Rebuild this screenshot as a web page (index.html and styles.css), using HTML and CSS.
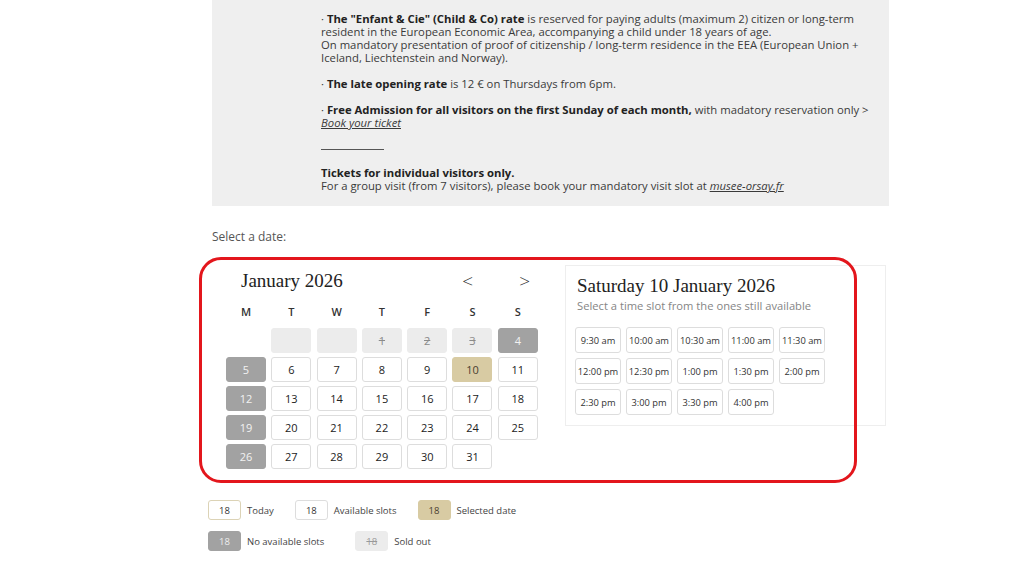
FILE: index.html
```html
<!DOCTYPE html>
<html lang="en">
<head>
<meta charset="utf-8">
<title>Select a date</title>
<link rel="stylesheet" href="styles.css">
</head>
<body>
<div class="page">
  <div class="notice">
    <p>· <b>The "Enfant &amp; Cie" (Child &amp; Co) rate</b> is reserved for paying adults (maximum 2) citizen or long-term resident in the European Economic Area, accompanying a child under 18 years of age.<br>On mandatory presentation of proof of citizenship / long-term residence in the EEA (European Union + Iceland, Liechtenstein and Norway).</p>
    <p>· <b>The late opening rate</b> is 12 € on Thursdays from 6pm.</p>
    <p>· <b>Free Admission for all visitors on the first Sunday of each month,</b> with madatory reservation only &gt; <a href="#">Book your ticket</a></p>
    <hr class="rule">
    <p><b>Tickets for individual visitors only.</b><br>For a group visit (from 7 visitors), please book your mandatory visit slot at <a href="#">musee-orsay.fr</a></p>
  </div>

  <div class="select-label">Select a date:</div>

  <div class="booking">
    <div class="calendar">
      <div class="cal-head">
        <span class="month">January 2026</span>
        <span class="nav">
          <span class="arrow">&lt;</span>
          <span class="arrow">&gt;</span>
        </span>
      </div>
      <div class="grid">
        <div class="dow">M</div><div class="dow">T</div><div class="dow">W</div><div class="dow">T</div><div class="dow">F</div><div class="dow">S</div><div class="dow">S</div>

        <div class="cell blank-first"></div>
        <div class="cell sold"></div>
        <div class="cell sold"></div>
        <div class="cell sold"><s>1</s></div>
        <div class="cell sold"><s>2</s></div>
        <div class="cell sold"><s>3</s></div>
        <div class="cell none">4</div>

        <div class="cell none">5</div>
        <div class="cell">6</div>
        <div class="cell">7</div>
        <div class="cell">8</div>
        <div class="cell">9</div>
        <div class="cell selected">10</div>
        <div class="cell">11</div>

        <div class="cell none">12</div>
        <div class="cell">13</div>
        <div class="cell">14</div>
        <div class="cell">15</div>
        <div class="cell">16</div>
        <div class="cell">17</div>
        <div class="cell">18</div>

        <div class="cell none">19</div>
        <div class="cell">20</div>
        <div class="cell">21</div>
        <div class="cell">22</div>
        <div class="cell">23</div>
        <div class="cell">24</div>
        <div class="cell">25</div>

        <div class="cell none">26</div>
        <div class="cell">27</div>
        <div class="cell">28</div>
        <div class="cell">29</div>
        <div class="cell">30</div>
        <div class="cell">31</div>
      </div>
    </div>

    <div class="panel">
      <div class="panel-title">Saturday 10 January 2026</div>
      <div class="panel-sub">Select a time slot from the ones still available</div>
      <div class="slots">
        <div class="slot">9:30 am</div>
        <div class="slot">10:00 am</div>
        <div class="slot">10:30 am</div>
        <div class="slot">11:00 am</div>
        <div class="slot">11:30 am</div>
        <div class="slot">12:00 pm</div>
        <div class="slot">12:30 pm</div>
        <div class="slot">1:00 pm</div>
        <div class="slot">1:30 pm</div>
        <div class="slot">2:00 pm</div>
        <div class="slot">2:30 pm</div>
        <div class="slot">3:00 pm</div>
        <div class="slot">3:30 pm</div>
        <div class="slot">4:00 pm</div>
      </div>
    </div>

    <div class="highlight"></div>
  </div>

  <div class="legend">
    <div class="legend-row">
      <div class="legend-item"><span class="key today">18</span><span>Today</span></div>
      <div class="legend-item"><span class="key">18</span><span>Available slots</span></div>
      <div class="legend-item"><span class="key selected">18</span><span>Selected date</span></div>
    </div>
    <div class="legend-row">
      <div class="legend-item"><span class="key none">18</span><span>No available slots</span></div>
      <div class="legend-item wide"><span class="key sold"><s>18</s></span><span>Sold out</span></div>
    </div>
  </div>
</div>
</body>
</html>
```

FILE: styles.css
```css
* { box-sizing: border-box; }

html, body {
  margin: 0;
  padding: 0;
  background: #ffffff;
}

body {
  font-family: "Open Sans", "Liberation Sans", sans-serif;
  color: #333333;
}

.page {
  width: 677px;
  margin-left: 212px;
}

/* Info notice */
.notice {
  background: #efefef;
  padding: 12px 13px 14px 109px;
  font-size: 11.3px;
  line-height: 13px;
  color: #3a3a3a;
}

.notice p {
  margin: 0 0 13px 0;
}

.notice p:last-child {
  margin-bottom: 0;
}

.notice b {
  font-weight: 700;
  color: #222;
}

.notice a {
  color: #3a3a3a;
  font-style: italic;
  text-decoration: underline;
}

.rule {
  width: 63px;
  margin: 20px 0 16px 0;
  border: 0;
  border-top: 1px solid #555;
  height: 0;
}

.select-label {
  margin-top: 23px;
  font-size: 12px;
  line-height: 16px;
  color: #555;
}

/* Booking area */
.booking {
  position: relative;
  display: flex;
  align-items: flex-start;
  margin-top: 12px;
  padding-top: 8px;
}

.calendar {
  margin-left: 14px;
  width: 312px;
  padding-top: 4px;
}

.cal-head {
  display: flex;
  align-items: center;
  height: 24px;
  padding-left: 15px;
}

.month {
  font-family: "Liberation Serif", "DejaVu Serif", serif;
  font-size: 19px;
  color: #222;
  flex: 1;
}

.nav {
  display: flex;
  gap: 46px;
  margin-right: 8px;
}

.arrow {
  font-size: 19px;
  color: #333;
  font-weight: 300;
  line-height: 24px;
}

.grid {
  display: grid;
  grid-template-columns: repeat(7, 40px);
  grid-template-rows: 20px repeat(5, 25px);
  column-gap: 5.3px;
  row-gap: 4px;
  margin-top: 11px;
}

.dow {
  display: flex;
  align-items: center;
  justify-content: center;
  align-self: start;
  font-size: 11px;
  font-weight: 600;
  color: #333;
  height: 14px;
}

.cell {
  display: flex;
  align-items: center;
  justify-content: center;
  border: 1px solid #dddddd;
  border-radius: 3px;
  background: #fff;
  font-size: 11px;
  color: #222;
}

.cell.blank-first {
  visibility: hidden;
}

.cell.sold {
  background: #ececec;
  border-color: #ececec;
  color: #8a8a8a;
}

.cell.sold s {
  text-decoration: line-through;
}

.cell.none {
  background: #a2a2a2;
  border-color: #a2a2a2;
  color: #f2f2f2;
}

.cell.selected {
  background: #d8cba3;
  border-color: #d8cba3;
  color: #4a4030;
}

/* Time slot panel */
.panel {
  margin-left: 27px;
  width: 321px;
  height: 161px;
  border: 1px solid #eeeeee;
  padding: 9px 9px 0 11px;
}

.panel-title {
  font-family: "Liberation Serif", "DejaVu Serif", serif;
  font-size: 19px;
  line-height: 22px;
  color: #222;
}

.panel-sub {
  margin-top: 2px;
  font-size: 11.2px;
  line-height: 14px;
  color: #858585;
}

.slots {
  display: grid;
  grid-template-columns: repeat(5, 46px);
  grid-auto-rows: 26px;
  column-gap: 5px;
  row-gap: 5px;
  margin-top: 14px;
  margin-left: -2px;
}

.slot {
  display: flex;
  align-items: center;
  justify-content: center;
  border: 1px solid #dddddd;
  border-radius: 3px;
  font-size: 9.3px;
  color: #333;
  white-space: nowrap;
}

/* Red annotation outline */
.highlight {
  position: absolute;
  left: -13px;
  top: 0;
  width: 658px;
  height: 226px;
  border: 3.5px solid #e3161c;
  border-radius: 22px;
  pointer-events: none;
}

/* Legend */
.legend {
  margin-left: -4px;
  margin-top: 31px;
  display: flex;
  flex-direction: column;
  gap: 11px;
}

.legend-row {
  display: flex;
  gap: 21px;
}

.legend-item {
  display: flex;
  align-items: center;
  gap: 6px;
  font-size: 9.5px;
  color: #444;
}

.legend-item.wide {
  margin-left: 10px;
}

.key {
  display: flex;
  align-items: center;
  justify-content: center;
  width: 33px;
  height: 20px;
  border: 1px solid #dddddd;
  border-radius: 3px;
  background: #fff;
  font-size: 9.5px;
  color: #333;
}

.key.today {
  border-color: #dcd3b6;
}

.key.selected {
  background: #d8cba3;
  border-color: #d8cba3;
  color: #4a4030;
}

.key.none {
  background: #a2a2a2;
  border-color: #a2a2a2;
  color: #eee;
}

.key.sold {
  background: #ececec;
  border-color: #ececec;
  color: #999;
}
```
